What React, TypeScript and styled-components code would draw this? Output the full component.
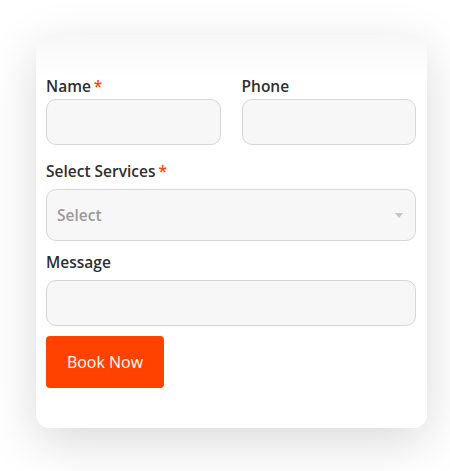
import React from "react";
import styled, { createGlobalStyle } from "styled-components";

const GlobalStyle = createGlobalStyle`
  html, body {
    margin: 0;
    padding: 0;
    background: #ffffff;
    font-family: "Open Sans", "Lato", sans-serif;
  }
`;

const Page = styled.div`
  padding: 35px 23px 43px 36px;
`;

const Card = styled.form`
  width: 391px;
  box-sizing: border-box;
  padding: 42px 11px 40px 10px;
  border-radius: 14px;
  background: linear-gradient(180deg, #f7f7f7 0px, #ffffff 42px);
  box-shadow: 0 14px 50px rgba(0, 0, 0, 0.15);
  display: flex;
  flex-direction: column;
`;

const Row = styled.div`
  display: grid;
  grid-template-columns: 1fr 1fr;
  column-gap: 21px;
`;

const Field = styled.div<{ $gap?: number }>`
  display: flex;
  flex-direction: column;
  margin-bottom: ${(p) => p.$gap ?? 0}px;
`;

const Label = styled.label<{ $space?: number }>`
  font-size: 15.5px;
  font-weight: 600;
  color: #2f2f2f;
  line-height: 18px;
  height: 18px;
  margin-bottom: ${(p) => p.$space ?? 9}px;
`;

const Required = styled.span`
  color: #ff4200;
  margin-left: 3px;
`;

const Input = styled.input`
  box-sizing: border-box;
  width: 100%;
  height: 46px;
  border: 1px solid #d6d6d6;
  border-radius: 10px;
  background: #f7f7f7;
  font: inherit;
  outline: none;
`;

const SelectBox = styled.div`
  box-sizing: border-box;
  height: 52px;
  border: 1px solid #d6d6d6;
  border-radius: 10px;
  background: #f7f7f7;
  display: flex;
  align-items: center;
  justify-content: space-between;
  padding: 0 12px 0 10px;
  color: #9a9a9a;
  font-size: 15.5px;
  font-weight: 600;
`;

const Caret = styled.span`
  width: 0;
  height: 0;
  border-left: 4px solid transparent;
  border-right: 4px solid transparent;
  border-top: 5px solid #c4c4c4;
`;

const Button = styled.button`
  align-self: flex-start;
  width: 118px;
  height: 52px;
  border: none;
  border-radius: 4px;
  background: #ff4200;
  color: #ffffff;
  font-family: inherit;
  font-size: 16px;
  font-weight: 500;
  cursor: pointer;
`;

export default function App() {
  return (
    <>
      <GlobalStyle />
      <Page>
        <Card onSubmit={(e) => e.preventDefault()}>
          <Row>
            <Field $gap={17}>
              <Label $space={4}>
                Name<Required>*</Required>
              </Label>
              <Input type="text" />
            </Field>
            <Field $gap={17}>
              <Label $space={4}>Phone</Label>
              <Input type="tel" />
            </Field>
          </Row>
          <Field $gap={12}>
            <Label>
              Select Services<Required>*</Required>
            </Label>
            <SelectBox>
              <span>Select</span>
              <Caret />
            </SelectBox>
          </Field>
          <Field $gap={10}>
            <Label>Message</Label>
            <Input type="text" />
          </Field>
          <Button type="submit">Book Now</Button>
        </Card>
      </Page>
    </>
  );
}
